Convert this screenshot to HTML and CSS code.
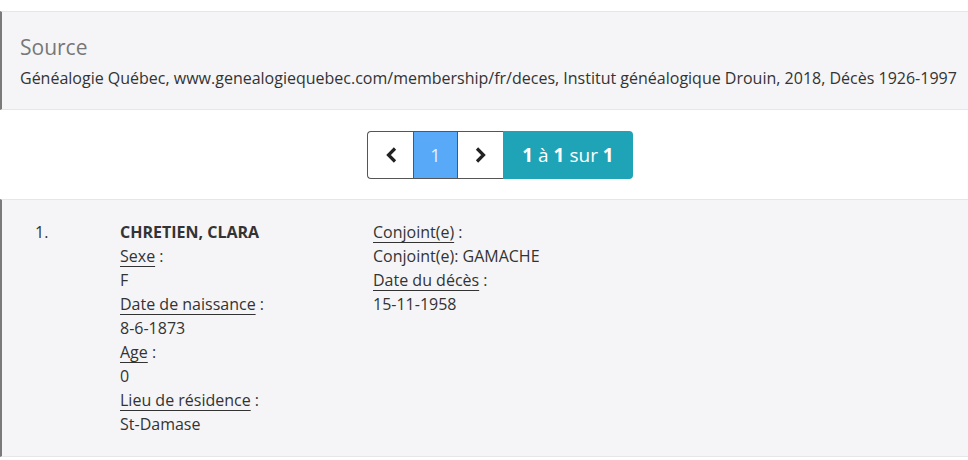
FILE: index.html
```html
<!DOCTYPE html>
<html lang="fr">
<head>
<meta charset="utf-8">
<title>Décès</title>
<link rel="stylesheet" href="styles.css">
</head>
<body>
<section class="source">
  <h3 class="source-title">Source</h3>
  <p class="source-text">Généalogie Québec, www.genealogiequebec.com/membership/fr/deces, Institut généalogique Drouin, 2018, Décès 1926-1997</p>
</section>

<nav class="pager-wrap">
  <div class="pager">
    <a class="pg pg-prev" href="#"><svg width="14" height="18" viewBox="0 0 14 18"><path d="M11 2.5 L4.5 9 L11 15.5" fill="none" stroke="#222" stroke-width="3.2"/></svg></a>
    <span class="pg pg-current">1</span>
    <a class="pg pg-next" href="#"><svg width="14" height="18" viewBox="0 0 14 18"><path d="M3 2.5 L9.5 9 L3 15.5" fill="none" stroke="#222" stroke-width="3.2"/></svg></a>
    <span class="pg-info"><b>1</b> à <b>1</b> sur <b>1</b></span>
  </div>
</nav>

<section class="record">
  <div class="num">1.</div>
  <div class="col col-a">
    <div class="name">CHRETIEN, CLARA</div>
    <div><span class="lbl">Sexe</span> :</div>
    <div>F</div>
    <div><span class="lbl">Date de naissance</span> :</div>
    <div>8-6-1873</div>
    <div><span class="lbl">Age</span> :</div>
    <div>0</div>
    <div><span class="lbl">Lieu de résidence</span> :</div>
    <div>St-Damase</div>
  </div>
  <div class="col col-b">
    <div><span class="lbl">Conjoint(e)</span> :</div>
    <div>Conjoint(e): GAMACHE</div>
    <div><span class="lbl">Date du décès</span> :</div>
    <div>15-11-1958</div>
  </div>
</section>
</body>
</html>
```

FILE: styles.css
```css
* { box-sizing: border-box; }
html, body { margin: 0; padding: 0; background: #fff; }
body {
  font-family: "Open Sans", "Liberation Sans", sans-serif;
  font-size: 16px;
  color: #333;
  line-height: 24px;
}
.source {
  margin-top: 11px;
  background: #f5f5f7;
  border-top: 1px solid #e6e6e9;
  border-bottom: 1px solid #e6e6e9;
  border-left: 2px solid #7a7a7a;
  padding: 21px 10px 19px 18px;
}
.source-title {
  margin: 0;
  font-size: 21px;
  font-weight: 400;
  line-height: 28px;
  color: #777;
}
.source-text {
  margin: 5px 0 0;
  white-space: nowrap;
}
.pager-wrap {
  display: flex;
  justify-content: center;
  padding: 21px 0 20px;
}
.pager {
  display: flex;
  height: 48px;
  margin-left: 32px;
}
.pg {
  width: 46px;
  display: flex;
  align-items: center;
  justify-content: center;
  text-decoration: none;
  font-size: 18px;
}
.pg-prev {
  border: 1px solid #555;
  border-right: none;
  border-radius: 4px 0 0 4px;
  background: #fff;
}
.pg-current {
  width: 44px;
  background: #58a9f7;
  color: #e4f0fd;
  border-top: 1px solid #555;
  border-bottom: 1px solid #555;
  border-left: 1px solid #555;
}
.pg-next {
  border: 1px solid #555;
  border-right: none;
  background: #fff;
}
.pg-info {
  width: 130px;
  background: #1fa3b7;
  color: #fff;
  font-size: 19px;
  display: flex;
  align-items: center;
  justify-content: center;
  border-radius: 0 4px 4px 0;
  white-space: pre;
}
.pg-info b { font-weight: 700; }
.record {
  background: #f5f5f7;
  border-top: 1px solid #e6e6e9;
  border-bottom: 1px solid #e6e6e9;
  border-left: 2px solid #7a7a7a;
  display: flex;
  padding: 20px 0 20px 33px;
}
.num { width: 85px; }
.col-a { width: 253px; }
.name { font-weight: 700; }
.lbl {
  text-decoration: underline;
  text-decoration-thickness: 1px;
  text-underline-offset: 4px;
}
```
